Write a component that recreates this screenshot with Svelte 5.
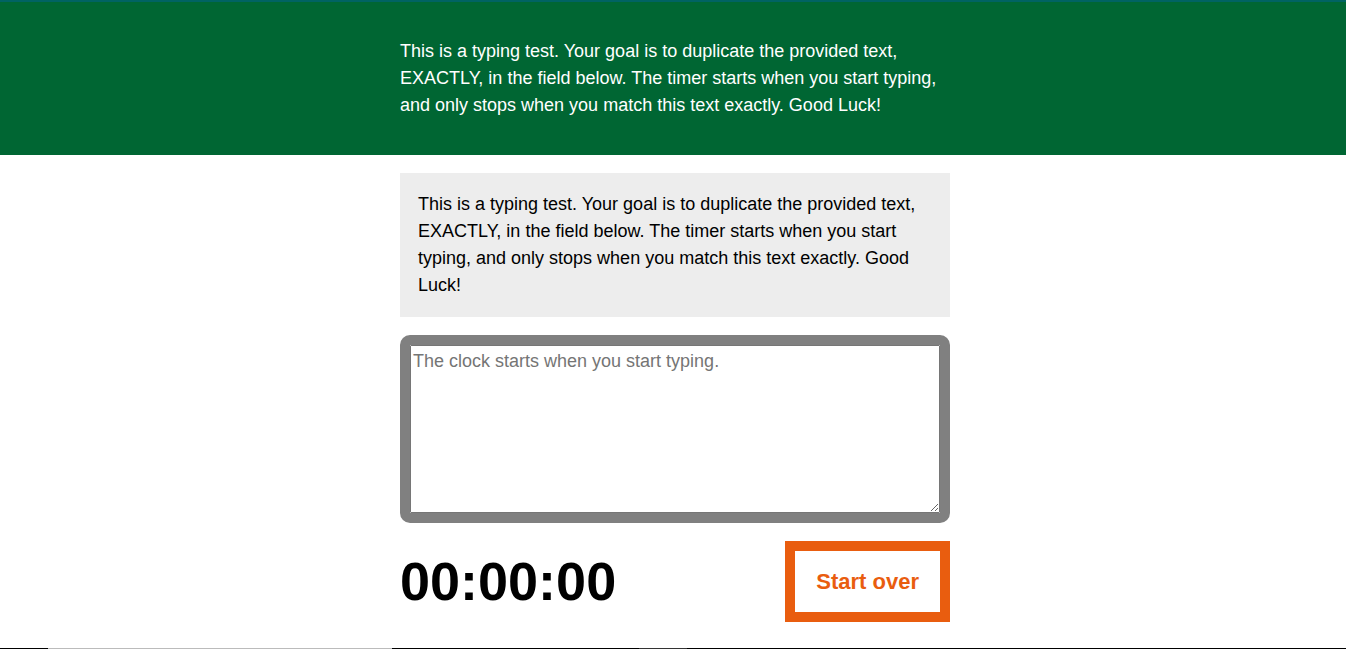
<script>
  const origin = 'This is a typing test. Your goal is to duplicate the provided text, EXACTLY, in the field below. The timer starts when you start typing, and only stops when you match this text exactly. Good Luck!';
  let typed = $state('');
  let elapsed = $state(0);
  let timer;

  const pad = (n) => String(n).padStart(2, '0');
  const clock = $derived(
    `${pad(Math.floor(elapsed / 6000))}:${pad(Math.floor(elapsed / 100) % 60)}:${pad(elapsed % 100)}`
  );

  function stop() {
    clearInterval(timer);
    timer = undefined;
  }

  function check() {
    if (typed === origin) {
      stop();
    } else if (!timer && typed.length > 0) {
      timer = setInterval(() => (elapsed += 1), 10);
    }
  }

  function reset() {
    stop();
    typed = '';
    elapsed = 0;
  }
</script>

<div class="page">
  <header class="masthead">
    <p class="intro">{origin}</p>
  </header>
  <main class="main">
    <div class="test">
      <p class="origin">{origin}</p>
      <div class="frame">
        <textarea
          class="field"
          rows="6"
          aria-label="Typing field"
          placeholder="The clock starts when you start typing."
          bind:value={typed}
          oninput={check}
        ></textarea>
      </div>
      <div class="meta">
        <div class="timer">{clock}</div>
        <button class="reset" type="button" onclick={reset}>Start over</button>
      </div>
    </div>
  </main>
  <div class="edge"></div>
</div>

<style>
  :global(body) {
    margin: 0;
    background: #fff;
  }
  .page {
    min-height: 100vh;
    box-sizing: border-box;
    display: flex;
    flex-direction: column;
    font: 18px/27px "Liberation Sans", Arial, sans-serif;
    color: #000;
  }
  .masthead {
    padding: 36px 16px 36px 20px;
    border-top: 2px solid #006363;
    background: #006633;
    color: #fff;
  }
  .main {
    padding: 18px 16px 18px 20px;
  }
  .intro,
  .test {
    max-width: 550px;
    margin: 0 auto;
  }
  .test {
    display: flex;
    flex-direction: column;
    gap: 18px;
  }
  .origin {
    margin: 0;
    padding: 18px;
    background: #ededed;
  }
  .frame {
    border: 10px solid grey;
    border-radius: 10px;
  }
  .field {
    display: block;
    box-sizing: border-box;
    width: 100%;
    padding: 2px;
    border: 1px solid #767676;
    border-radius: 1px;
    font: inherit;
  }
  .meta {
    display: flex;
    justify-content: space-between;
    align-items: center;
  }
  .timer {
    font-size: 54px;
    line-height: 81px;
    font-weight: bold;
  }
  .reset {
    padding: 16px 21px;
    border: 10px solid #e95d0f;
    background: #fff;
    color: #e95d0f;
    font: bold 22px/29px "Liberation Sans", Arial, sans-serif;
  }
  .edge {
    height: 1px;
    margin-top: auto;
    background: linear-gradient(to right, #000 48px, #bbb 48px, #bbb 392px, #000 392px, #000 639px, #333 639px, #333 687px, #000 687px);
  }
</style>
